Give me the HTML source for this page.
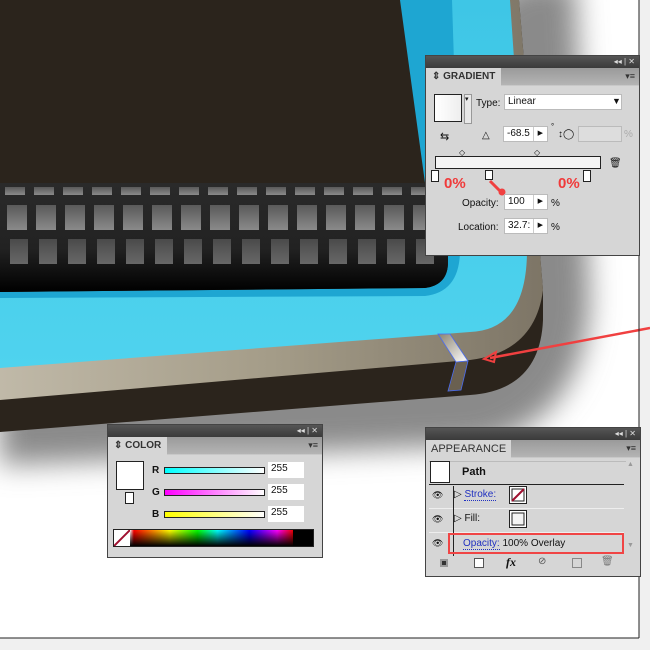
<!DOCTYPE html>
<html><head><meta charset="utf-8"><style>
*{margin:0;padding:0;box-sizing:border-box}
body{width:650px;height:650px;overflow:hidden;background:#f0f0f0;font-family:"Liberation Sans",Tahoma,sans-serif;position:relative}
.pnl{position:absolute;background:#d6d6d6;border:1px solid #444;font-size:10px;color:#111}
.tb{height:12px;background:linear-gradient(#555,#3a3a3a);color:#ddd;font-size:8px;text-align:right;padding-right:4px;line-height:12px}
.tabs{height:18px;background:linear-gradient(#9a9a9a,#b4b4b4);position:relative;border-bottom:1px solid #c8c8c8}
.tab{position:absolute;left:0;top:0;height:18px;background:#d6d6d6;font-weight:bold;font-size:10px;line-height:18px;padding:0 6px;color:#333}
.menu{position:absolute;right:4px;top:3px;font-size:9px;color:#333}
.inp{position:absolute;background:#fff;border:1px solid #bbb;font-size:10px;line-height:14px;padding-left:3px;height:16px}
.red{color:#f03a3a;font-weight:bold;font-size:15px;position:absolute}
</style></head><body>
<svg width="650" height="650" style="position:absolute;left:0;top:0">
<defs>
<filter id="bl1" x="-20%" y="-20%" width="140%" height="140%"><feGaussianBlur stdDeviation="14"/></filter>
<linearGradient id="tp" x1="0" y1="0" x2="1" y2="0"><stop offset="0" stop-color="#c0b9a8"/><stop offset=".5" stop-color="#a49c88"/><stop offset="1" stop-color="#7d7566"/></linearGradient>
<linearGradient id="blg" x1="0" y1="0" x2="0" y2="1"><stop offset="0" stop-color="#3ec6e6"/><stop offset="1" stop-color="#4fd3ee"/></linearGradient>
<linearGradient id="kb" x1="0" y1="0" x2="0" y2="1"><stop offset="0" stop-color="#2a2a2a"/><stop offset=".6" stop-color="#222"/><stop offset="1" stop-color="#000"/></linearGradient>
<linearGradient id="key" x1="0" y1="0" x2="0" y2="1"><stop offset="0" stop-color="#5a5a5a"/><stop offset="1" stop-color="#8a8a8a"/></linearGradient>
<linearGradient id="hl" x1="0" y1="0" x2="1" y2="1"><stop offset="0" stop-color="#8a8270"/><stop offset="1" stop-color="#fff"/></linearGradient>
</defs>
<rect x="0" y="0" width="639" height="638" fill="#fff"/>
<path d="M520 -20 L575 -20 L590 300 Q585 420 480 445 L0 465 L0 400Z" fill="#8a8a8a" filter="url(#bl1)"/>
<path d="M400 0 L519 0 L543 290 L543 320 Q540 390 470 395 L0 432 L0 0Z" fill="#2b241c"/>
<path d="M400 0 L519 0 L543 290 Q535 352 470 360 L0 400 L0 0Z" fill="url(#tp)"/>
<path d="M400 0 L510 0 L527 250 Q527 330 470 332 L0 368 L0 0Z" fill="url(#blg)"/>
<path d="M400 0 L452 0 L460 250 Q460 292 425 296 L0 298 L0 0Z" fill="#1ea6d2"/>
<path d="M0 0 L400 0 L425 183 L448 183 L448 262 Q448 285 425 288 L0 292Z" fill="#2b241c"/>
<path d="M0 183 L448 183 L448 262 Q448 285 425 288 L0 292Z" fill="url(#kb)"/>
<g fill="url(#key)">
<rect x="5" y="187" width="20" height="8"/><rect x="34" y="187" width="20" height="8"/><rect x="63" y="187" width="20" height="8"/><rect x="92" y="187" width="20" height="8"/><rect x="121" y="187" width="20" height="8"/><rect x="150" y="187" width="20" height="8"/><rect x="179" y="187" width="20" height="8"/><rect x="208" y="187" width="20" height="8"/><rect x="237" y="187" width="20" height="8"/><rect x="266" y="187" width="20" height="8"/><rect x="295" y="187" width="20" height="8"/><rect x="324" y="187" width="20" height="8"/><rect x="353" y="187" width="20" height="8"/><rect x="382" y="187" width="20" height="8"/><rect x="411" y="187" width="20" height="8"/>
<rect x="7" y="205" width="20" height="25"/><rect x="36" y="205" width="20" height="25"/><rect x="65" y="205" width="20" height="25"/><rect x="94" y="205" width="20" height="25"/><rect x="123" y="205" width="20" height="25"/><rect x="152" y="205" width="20" height="25"/><rect x="181" y="205" width="20" height="25"/><rect x="210" y="205" width="20" height="25"/><rect x="239" y="205" width="20" height="25"/><rect x="268" y="205" width="20" height="25"/><rect x="297" y="205" width="20" height="25"/><rect x="326" y="205" width="20" height="25"/><rect x="355" y="205" width="20" height="25"/><rect x="384" y="205" width="20" height="25"/><rect x="413" y="205" width="20" height="25"/>
<rect x="10" y="239" width="18" height="25" opacity=".7"/><rect x="39" y="239" width="18" height="25" opacity=".7"/><rect x="68" y="239" width="18" height="25" opacity=".7"/><rect x="97" y="239" width="18" height="25" opacity=".7"/><rect x="126" y="239" width="18" height="25" opacity=".7"/><rect x="155" y="239" width="18" height="25" opacity=".7"/><rect x="184" y="239" width="18" height="25" opacity=".7"/><rect x="213" y="239" width="18" height="25" opacity=".7"/><rect x="242" y="239" width="18" height="25" opacity=".7"/><rect x="271" y="239" width="18" height="25" opacity=".7"/><rect x="300" y="239" width="18" height="25" opacity=".7"/><rect x="329" y="239" width="18" height="25" opacity=".7"/><rect x="358" y="239" width="18" height="25" opacity=".7"/><rect x="387" y="239" width="18" height="25" opacity=".7"/><rect x="416" y="239" width="18" height="25" opacity=".7"/>
</g>
<path d="M438 334 L450 334 L468 361 L456 362Z" fill="url(#hl)" stroke="#4a6cf0" stroke-width=".8"/>
<path d="M456 362 L468 361 L461 390 L448 391Z" fill="#6a6050" stroke="#4a6cf0" stroke-width=".8"/>
<line x1="650" y1="328" x2="490" y2="358" stroke="#f04040" stroke-width="2.5"/>
<path d="M484 359 L496 352 L494 362Z" fill="none" stroke="#f04040" stroke-width="2"/>
<line x1="639" y1="0" x2="639" y2="638" stroke="#222"/>
<line x1="0" y1="638" x2="639" y2="638" stroke="#222"/>
</svg>

<div class="pnl" style="left:425px;top:55px;width:215px;height:201px">
<div class="tb">◂◂ | ✕</div>
<div class="tabs"><div class="tab">⇕ GRADIENT</div><div class="menu">▾≡</div></div>
<div style="position:absolute;left:8px;top:38px;width:28px;height:28px;border:1px solid #222;background:linear-gradient(90deg,#fff,#eee)"></div>
<div style="position:absolute;left:38px;top:38px;width:8px;height:30px;border:1px solid #999;background:#e8e8e8;font-size:7px">▾</div>
<div style="position:absolute;left:50px;top:42px">Type:</div>
<div class="inp" style="left:78px;top:38px;width:118px">Linear</div>
<div style="position:absolute;left:186px;top:40px;font-size:9px">▼</div>
<div style="position:absolute;left:14px;top:74px;font-size:11px">⇆</div>
<div style="position:absolute;left:56px;top:74px;font-size:10px">△</div>
<div class="inp" style="left:77px;top:70px;width:45px">-68.5 <span style="float:right;border-left:1px solid #ccc;padding:0 4px;font-size:7px">▶</span></div>
<div style="position:absolute;left:125px;top:66px;font-size:8px">°</div>
<div style="position:absolute;left:132px;top:73px;font-size:10px">↕◯</div>
<div class="inp" style="left:152px;top:70px;width:44px;background:#ddd"></div>
<div style="position:absolute;left:198px;top:73px;color:#aaa">%</div>
<div style="position:absolute;left:33px;top:92px;font-size:8px">◇</div>
<div style="position:absolute;left:108px;top:92px;font-size:8px">◇</div>
<div style="position:absolute;left:9px;top:100px;width:166px;height:13px;border:1px solid #222;background:#f4f4f4"></div>
<div style="position:absolute;left:183px;top:102px;font-size:10px">🗑</div>
<div style="position:absolute;left:5px;top:114px;width:8px;height:12px;border:1px solid #222;background:#fff"></div>
<div style="position:absolute;left:59px;top:114px;width:8px;height:10px;border:1px solid #222;background:#fff"></div>
<div style="position:absolute;left:157px;top:114px;width:8px;height:12px;border:1px solid #222;background:#fff"></div>
<div class="red" style="left:18px;top:119px">0%</div>
<div class="red" style="left:132px;top:119px">0%</div>
<svg style="position:absolute;left:60px;top:123px" width="30" height="20"><path d="M4 2 L14 12" stroke="#f04040" stroke-width="3"/><circle cx="16" cy="13" r="3.5" fill="#f04040"/></svg>
<div style="position:absolute;left:36px;top:142px">Opacity:</div>
<div class="inp" style="left:78px;top:138px;width:44px">100 <span style="float:right;border-left:1px solid #ccc;padding:0 4px;font-size:7px">▶</span></div>
<div style="position:absolute;left:125px;top:142px">%</div>
<div style="position:absolute;left:32px;top:166px">Location:</div>
<div class="inp" style="left:78px;top:162px;width:44px">32.7: <span style="float:right;border-left:1px solid #ccc;padding:0 4px;font-size:7px">▶</span></div>
<div style="position:absolute;left:125px;top:166px">%</div>
</div>

<div class="pnl" style="left:107px;top:424px;width:216px;height:134px">
<div class="tb">◂◂ | ✕</div>
<div class="tabs"><div class="tab">⇕ COLOR</div><div class="menu">▾≡</div></div>
<div style="position:absolute;left:8px;top:36px;width:28px;height:29px;border:1px solid #222;background:#fff"></div>
<div style="position:absolute;left:17px;top:67px;width:9px;height:12px;border:1px solid #222;background:#fff"></div>
<div style="position:absolute;left:44px;top:40px;font-weight:bold">R</div>
<div style="position:absolute;left:56px;top:42px;width:101px;height:7px;border:1px solid #222;background:linear-gradient(90deg,#0ff,#fff)"></div>
<div class="inp" style="left:160px;top:37px;width:36px;border:0">255</div>
<div style="position:absolute;left:44px;top:62px;font-weight:bold">G</div>
<div style="position:absolute;left:56px;top:64px;width:101px;height:7px;border:1px solid #222;background:linear-gradient(90deg,#f0f,#fff)"></div>
<div class="inp" style="left:160px;top:59px;width:36px;border:0">255</div>
<div style="position:absolute;left:44px;top:84px;font-weight:bold">B</div>
<div style="position:absolute;left:56px;top:86px;width:101px;height:7px;border:1px solid #222;background:linear-gradient(90deg,#ff0,#fff)"></div>
<div class="inp" style="left:160px;top:81px;width:36px;border:0">255</div>
<div style="position:absolute;left:5px;top:104px;width:201px;height:18px;border:1px solid #222;background:linear-gradient(transparent,#000),linear-gradient(90deg,#fff 0,#fff 8%,#f00 10%,#ff0 28%,#0f0 42%,#0ff 52%,#00f 68%,#f0f 82%,#e00 90%,#000 90%)"></div>
<svg style="position:absolute;left:6px;top:105px" width="16" height="16"><rect width="16" height="16" fill="#fff"/><line x1="0" y1="16" x2="16" y2="0" stroke="#a01030" stroke-width="2"/></svg>
</div>

<div class="pnl" style="left:425px;top:427px;width:216px;height:150px">
<div class="tb">◂◂ | ✕</div>
<div class="tabs"><div class="tab" style="font-weight:normal;font-size:11px;padding:0 5px">APPEARANCE</div><div class="menu">▾≡</div></div>
<div style="position:absolute;left:3px;top:33px;width:197px;height:105px;border-top:1px solid #bbb"></div>
<div style="position:absolute;left:4px;top:33px;width:20px;height:22px;border:1px solid #222;background:#fff"></div>
<div style="position:absolute;left:36px;top:38px;font-weight:bold;font-size:11px">Path</div>
<div style="position:absolute;left:3px;top:56px;width:195px;border-top:1px solid #222"></div>
<div style="position:absolute;left:3px;top:80px;width:195px;border-top:1px solid #eee"></div>
<div style="position:absolute;left:3px;top:104px;width:195px;border-top:1px solid #eee"></div>
<div style="position:absolute;left:6px;top:62px;font-size:9px">👁</div>
<div style="position:absolute;left:6px;top:86px;font-size:9px">👁</div>
<div style="position:absolute;left:6px;top:110px;font-size:9px">👁</div>
<div style="position:absolute;left:27px;top:58px;width:0;height:70px;border-left:1px solid #222"></div>
<div style="position:absolute;left:28px;top:61px">▷ <span style="color:#2030c0;border-bottom:1px dotted #2030c0">Stroke:</span></div>
<svg style="position:absolute;left:83px;top:58px" width="18" height="18"><rect x=".5" y=".5" width="17" height="17" fill="#fff" stroke="#222"/><rect x="3" y="3" width="12" height="12" fill="none" stroke="#222"/><line x1="3" y1="15" x2="15" y2="3" stroke="#a01030" stroke-width="2"/></svg>
<div style="position:absolute;left:28px;top:85px">▷ Fill:</div>
<svg style="position:absolute;left:83px;top:82px" width="18" height="18"><rect x=".5" y=".5" width="17" height="17" fill="#fff" stroke="#222"/><rect x="3" y="3" width="12" height="12" fill="#f4f4f4" stroke="#222"/></svg>
<div style="position:absolute;left:22px;top:105px;width:176px;height:21px;border:2px solid #f04545"></div>
<div style="position:absolute;left:37px;top:110px"><span style="color:#2030c0;border-bottom:1px dotted #2030c0">Opacity:</span> 100% Overlay</div>
<div style="position:absolute;left:201px;top:33px;font-size:7px;color:#999">▲</div>
<div style="position:absolute;left:201px;top:114px;font-size:7px;color:#999">▼</div>
<div style="position:absolute;left:14px;top:131px;width:8px;height:8px;background:#333;border:2px solid #999"></div>
<div style="position:absolute;left:48px;top:130px;width:10px;height:10px;border:1px solid #555;background:#fff"></div>
<div style="position:absolute;left:80px;top:127px;font-style:italic;font-family:'Liberation Serif',serif;font-weight:bold;font-size:12px">fx</div>
<div style="position:absolute;left:112px;top:128px;font-size:10px;color:#555">⊘</div>
<div style="position:absolute;left:146px;top:130px;width:10px;height:10px;border:1px solid #888"></div>
<div style="position:absolute;left:175px;top:128px;font-size:10px;color:#777">🗑</div>
</div>
</body></html>
